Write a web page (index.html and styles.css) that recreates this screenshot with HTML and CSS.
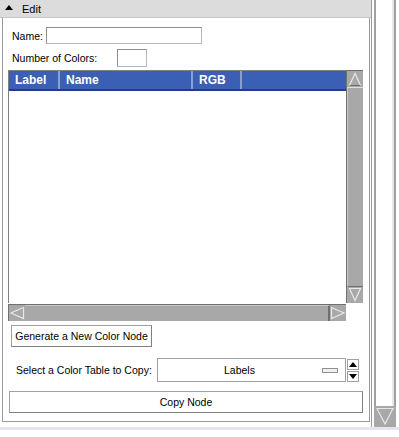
FILE: index.html
```html
<!DOCTYPE html>
<html>
<head>
<meta charset="utf-8">
<link rel="stylesheet" href="styles.css">
</head>
<body>
<div class="screen">
  <div class="left">
    <div class="header"><span class="tri"></span><span class="htitle">Edit</span></div>
    <div class="panel">
      <div class="row name-row"><span class="lbl">Name:</span><span class="input name-input"></span></div>
      <div class="row num-row"><span class="lbl">Number of Colors:</span><span class="input num-input"></span></div>
      <div class="table">
        <div class="tmain">
          <div class="tview">
            <div class="thead">
              <div class="th c1">Label</div>
              <div class="th c2">Name</div>
              <div class="th c3">RGB</div>
              <div class="th c4"></div>
            </div>
            <div class="tbody"></div>
          </div>
          <div class="vscroll">
            <div class="arrow">
              <svg width="16" height="16" viewBox="0 0 16 16"><path d="M2.5 14.5 L8 2.5 L13.5 14.5 Z" fill="#a8a8a8" stroke="#e8e8e8" stroke-width="1.2"/><path d="M2.5 14.5 L13.5 14.5" stroke="#707070"/></svg>
            </div>
            <div class="track v"></div>
            <div class="arrow">
              <svg width="16" height="15" viewBox="0 0 16 15"><path d="M2.5 1.5 L8 13.5 L13.5 1.5 Z" fill="#a8a8a8" stroke="#e8e8e8" stroke-width="1.2"/></svg>
            </div>
          </div>
        </div>
        <div class="hrow">
          <div class="hscroll">
            <div class="harrow">
              <svg width="16" height="16" viewBox="0 0 16 16"><path d="M14.5 2.5 L2 8 L14.5 13.5 Z" fill="#a8a8a8" stroke="#e8e8e8" stroke-width="1.2"/></svg>
            </div>
            <div class="track h"></div>
            <div class="harrow">
              <svg width="16" height="16" viewBox="0 0 16 16"><path d="M1.5 2.5 L14 8 L1.5 13.5 Z" fill="#a8a8a8" stroke="#e8e8e8" stroke-width="1.2"/></svg>
            </div>
          </div>
          <div class="corner"></div>
        </div>
      </div>
      <div class="btn gen">Generate a New Color Node</div>
      <div class="row sel-row">
        <span class="lbl sel-lbl">Select a Color Table to Copy:</span>
        <div class="combo"><span class="combo-text">Labels</span><span class="combo-ind"></span></div>
        <div class="spin">
          <div class="spinb"><svg width="8" height="5" viewBox="0 0 8 5"><path d="M0 5 L4 0 L8 5 Z" fill="#000"/></svg></div>
          <div class="spinb"><svg width="8" height="5" viewBox="0 0 8 5"><path d="M0 0 L4 5 L8 0 Z" fill="#000"/></svg></div>
        </div>
      </div>
      <div class="btn copy">Copy Node</div>
    </div>
  </div>
  <div class="outer-scroll">
    <div class="os-track"></div>
    <div class="os-arrow">
      <svg width="20" height="20" viewBox="0 0 20 20"><path d="M2 2.5 L10 18 L18 2.5 Z" fill="#a8a8a8" stroke="#e8e8e8" stroke-width="1.2"/></svg>
    </div>
  </div>
</div>
<div class="bottom-line"></div>
</body>
</html>
```
FILE: styles.css
```css
html, body {
  margin: 0;
  padding: 0;
  background: #ffffff;
  font-family: "Liberation Sans", Arial, sans-serif;
  font-size: 10.5px;
  color: #000;
}
.screen {
  display: flex;
  height: 427px;
  width: 399px;
}
.left {
  width: 372px;
  display: flex;
  flex-direction: column;
  border-right: 1px solid #9a9a9a;
}
.header {
  background: #dcdcdc;
  border-bottom: 1px solid #c4c4c4;
  display: flex;
  align-items: center;
  box-sizing: border-box;
  height: 18px;
}
.tri {
  width: 0;
  height: 0;
  border-left: 4px solid transparent;
  border-right: 4px solid transparent;
  border-bottom: 5px solid #000;
  margin-left: 5px;
  margin-right: 9px;
  margin-top: -3px;
}
.htitle {
  font-size: 11px;
}
.panel {
  margin-left: 2px;
  margin-right: 1px;
  border-left: 1px solid #9a9a9a;
  border-right: 1px solid #9a9a9a;
  border-bottom: 1px solid #9a9a9a;
  height: 404px;
  box-sizing: border-box;
  padding: 9px 0 0 5px;
  display: flex;
  flex-direction: column;
}
.row {
  display: flex;
  align-items: center;
  white-space: nowrap;
}
.lbl {
  padding-left: 4px;
  flex-shrink: 0;
}
.input {
  display: block;
  border: 1px solid #b8b8b8;
  border-top-color: #8e8e8e;
  border-left-color: #8e8e8e;
  background: #fff;
  box-sizing: border-box;
  flex-shrink: 0;
}
.name-input {
  width: 156px;
  height: 17px;
  margin-left: 3px;
}
.num-row {
  margin-top: 5px;
}
.num-input {
  width: 30px;
  height: 18px;
  margin-left: 20px;
}
.table {
  margin-top: 3px;
  width: 355px;
  display: flex;
  flex-direction: column;
}
.tmain {
  display: flex;
  height: 233px;
}
.tview {
  width: 338px;
  border-top: 1px solid #808080;
  border-left: 1px solid #808080;
  box-sizing: border-box;
  background: #fff;
  display: flex;
  flex-direction: column;
}
.thead {
  display: flex;
  height: 20px;
  background: #3a5fb5;
  border-bottom: 2px solid #203f80;
  box-sizing: border-box;
}
.th {
  color: #fff;
  font-weight: bold;
  font-size: 12px;
  line-height: 18px;
  padding-left: 6px;
  box-sizing: border-box;
  border-right: 2px solid #8aa0d0;
}
.c1 { width: 51px; }
.c2 { width: 133px; }
.c3 { width: 49px; }
.c4 { flex: 1; border-right: none; }
.tbody { flex: 1; }
.vscroll {
  width: 17px;
  display: flex;
  flex-direction: column;
  background: #a8a8a8;
  border-left: 1px solid #707070;
  border-top: 1px solid #707070;
  box-sizing: border-box;
}
.arrow {
  height: 16px;
  display: flex;
  justify-content: center;
}
.track.v {
  flex: 1;
  border-left: 1px solid #c8c8c8;
  border-top: 1px solid #e0e0e0;
  border-bottom: 1px solid #707070;
}
.hrow {
  display: flex;
  height: 17px;
  margin-top: 1px;
}
.hscroll {
  width: 338px;
  display: flex;
  background: #a8a8a8;
  border-top: 1px solid #707070;
  border-left: 1px solid #707070;
  box-sizing: border-box;
}
.harrow {
  width: 16px;
  display: flex;
  align-items: center;
}
.track.h {
  flex: 1;
  border-top: 1px solid #c8c8c8;
  border-right: 2px solid #707070;
}
.corner {
  flex: 1;
  background: #fff;
}
.btn {
  border: 1px solid #a0a0a0;
  border-right-color: #808080;
  border-bottom-color: #808080;
  background: #fff;
  box-sizing: border-box;
  display: flex;
  align-items: center;
  justify-content: center;
  white-space: nowrap;
}
.gen {
  margin-top: 4px;
  margin-left: 3px;
  width: 141px;
  height: 22px;
}
.sel-row {
  margin-top: 11px;
}
.sel-lbl {
  padding-left: 8px;
  width: 141px;
  box-sizing: border-box;
}
.combo {
  width: 189px;
  height: 24px;
  border: 1px solid #a0a0a0;
  box-sizing: border-box;
  display: flex;
  align-items: center;
  position: relative;
  margin-left: 8px;
  flex-shrink: 0;
}
.combo-text {
  flex: 1;
  text-align: center;
  padding-right: 24px;
}
.combo-ind {
  position: absolute;
  right: 7px;
  top: 9px;
  width: 14px;
  height: 3px;
  background: #f0f0f0;
  border: 1px solid #909090;
}
.spin {
  display: flex;
  flex-direction: column;
  margin-left: 1px;
  gap: 1px;
}
.spinb {
  width: 12px;
  height: 11px;
  border: 1px solid #a0a0a0;
  box-sizing: border-box;
  display: flex;
  align-items: center;
  justify-content: center;
}
.copy {
  margin-top: 9px;
  margin-left: 1px;
  width: 354px;
  height: 22px;
}
.outer-scroll {
  width: 26px;
  display: flex;
  flex-direction: column;
  padding-left: 1px;
}
.os-track {
  flex: 1;
  border-left: 2px solid #a0a0a0;
  border-right: 2px solid #a0a0a0;
  margin: 0 3px 0 1px;
  background: #fff;
  box-shadow: inset -2px 0 0 #e8e8e8;
}
.os-arrow {
  height: 21px;
  background: #a8a8a8;
  margin: 0 3px 0 1px;
  display: flex;
  justify-content: center;
}
.bottom-line {
  height: 3px;
  background: #e4e4f4;
}
```
